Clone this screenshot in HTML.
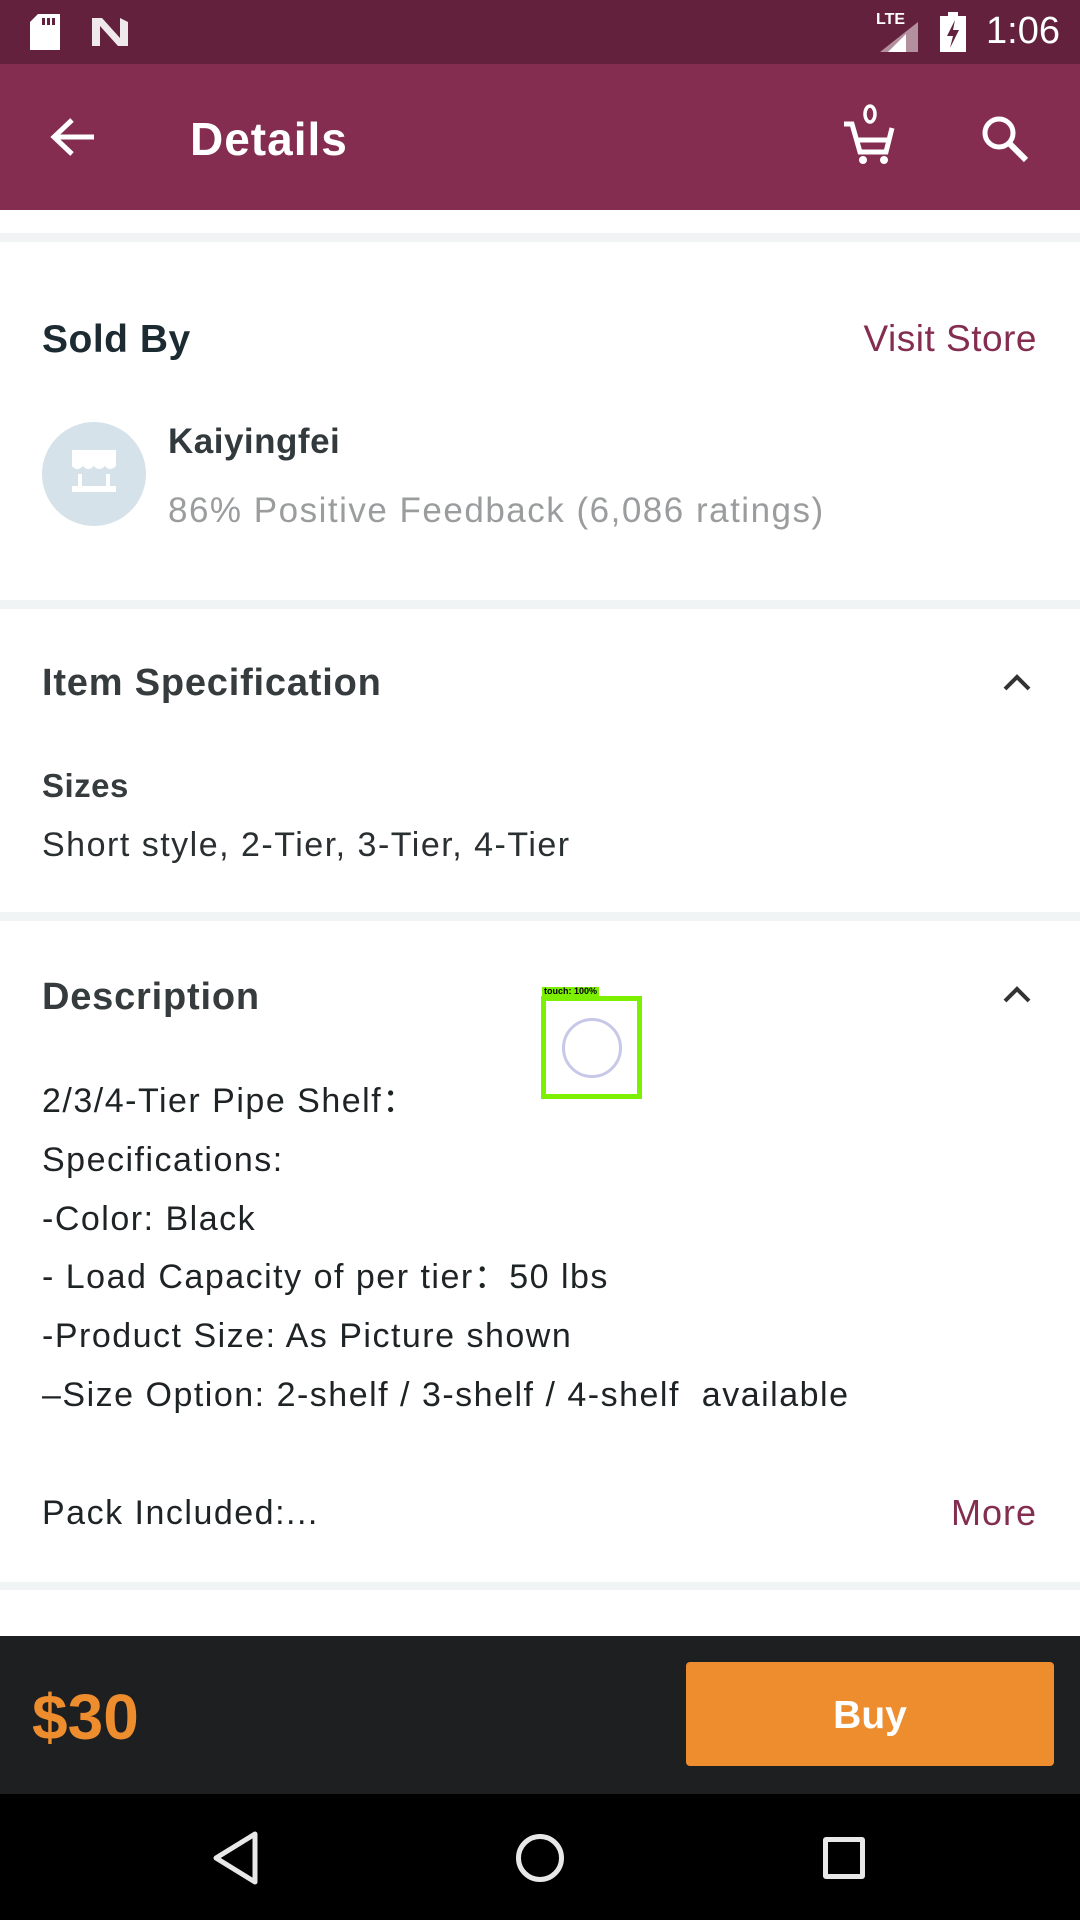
<!DOCTYPE html>
<html><head><meta charset="utf-8"><style>
*{margin:0;padding:0;box-sizing:border-box}
body{width:1080px;height:1920px;position:relative;background:#fff;font-family:"Liberation Sans",sans-serif;overflow:hidden}
.a{position:absolute}
.t{position:absolute;white-space:nowrap;line-height:1}
.r{letter-spacing:1.5px}
</style></head><body>
<div class="a" style="left:0;top:0;width:1080px;height:64px;background:#64213d"></div>
<div class="a" style="left:0;top:64px;width:1080px;height:146px;background:#842d50"></div>
<svg class="a" style="left:30px;top:14px" width="34" height="36"><path d="M8 0H30V36H0V8Z" fill="#fff"/><rect x="12" y="4" width="3" height="7" fill="#64213d"/><rect x="17" y="4" width="3" height="7" fill="#64213d"/><rect x="22" y="4" width="3" height="7" fill="#64213d"/></svg>
<svg class="a" style="left:90px;top:16px" width="40" height="30"><path d="M2 2L12 2L30 22V2L38 6V30L28 30L10 10V30H2Z" fill="#fff" opacity=".9"/></svg>
<div class="t" style="left:876px;top:12px;font-size:16px;color:#fff;font-weight:bold">LTE</div>
<svg class="a" style="left:880px;top:22px" width="40" height="30"><path d="M38 0V30H0Z" fill="#fff" opacity=".5"/><path d="M26 12V30H8Z" fill="#fff"/></svg>
<svg class="a" style="left:940px;top:12px" width="26" height="40"><rect x="8" y="0" width="10" height="4" fill="#fff"/><rect x="0" y="4" width="26" height="36" fill="#fff"/><path d="M15 8L7 24H13L10 36L19 18H13Z" fill="#64213d"/></svg>
<div class="t" style="left:986px;top:12px;font-size:38px;color:#fff">1:06</div>
<svg class="a" style="left:50px;top:116px" width="46" height="42"><path d="M44 21H6M22 4L4 21L22 38" stroke="#fff" stroke-width="5" fill="none"/></svg>
<div class="t" style="left:190px;top:116px;font-size:46px;color:#fff;font-weight:bold;letter-spacing:1px">Details</div>
<svg class="a" style="left:842px;top:102px" width="56" height="62"><path d="M2 22H10L18 50H44L50 26" stroke="#fff" stroke-width="5" fill="none"/><path d="M16 38H46" stroke="#fff" stroke-width="5"/><circle cx="21" cy="58" r="4" fill="#fff"/><circle cx="42" cy="58" r="4" fill="#fff"/><ellipse cx="28" cy="12" rx="5" ry="8" stroke="#fff" stroke-width="3.5" fill="none"/></svg>
<svg class="a" style="left:980px;top:114px" width="50" height="50"><circle cx="19" cy="19" r="14" stroke="#fff" stroke-width="5" fill="none"/><path d="M29 29L46 46" stroke="#fff" stroke-width="6"/></svg>
<div class="a" style="left:0;top:233px;width:1080px;height:9px;background:#f1f4f4"></div>
<div class="a" style="left:0;top:600px;width:1080px;height:9px;background:#f1f4f4"></div>
<div class="a" style="left:0;top:912px;width:1080px;height:9px;background:#f1f4f4"></div>
<div class="a" style="left:0;top:1582px;width:1080px;height:8px;background:#f1f4f4"></div>
<div class="t" style="left:42px;top:320px;font-size:39px;font-weight:bold;color:#1c2a32;letter-spacing:0.5px">Sold By</div>
<div class="t r" style="right:43px;top:320px;font-size:37px;color:#842d50;letter-spacing:0.5px">Visit Store</div>
<div class="a" style="left:42px;top:422px;width:104px;height:104px;border-radius:50%;background:#d5e2ea"></div>
<svg class="a" style="left:70px;top:448px" width="48" height="50"><path d="M2 2H46V18Q40 24 35 18Q29 24 24 18Q18 24 13 18Q7 24 2 18Z" fill="#fff"/><rect x="8" y="26" width="4" height="14" fill="#fff"/><rect x="36" y="26" width="4" height="14" fill="#fff"/><rect x="2" y="38" width="44" height="6" fill="#fff"/></svg>
<div class="t" style="left:168px;top:424px;font-size:35px;font-weight:bold;color:#333a3d;letter-spacing:0.5px">Kaiyingfei</div>
<div class="t r" style="left:168px;top:493px;font-size:35px;color:#9a9c9d">86% Positive Feedback (6,086 ratings)</div>
<div class="t" style="left:42px;top:664px;font-size:38px;font-weight:bold;color:#363c3e;letter-spacing:0.8px">Item Specification</div>
<svg class="a" style="left:1002px;top:672px" width="30" height="20"><path d="M3 17L15 5L27 17" stroke="#333" stroke-width="4" fill="none"/></svg>
<div class="t" style="left:42px;top:769px;font-size:33px;font-weight:bold;color:#363c3e;letter-spacing:0.5px">Sizes</div>
<div class="t r" style="left:42px;top:828px;font-size:34px;color:#2a2f31">Short style, 2-Tier, 3-Tier, 4-Tier</div>
<div class="t" style="left:42px;top:978px;font-size:38px;font-weight:bold;color:#363c3e;letter-spacing:0.8px">Description</div>
<svg class="a" style="left:1002px;top:984px" width="30" height="20"><path d="M3 17L15 5L27 17" stroke="#333" stroke-width="4" fill="none"/></svg>
<div class="a r" style="left:42px;top:1072px;font-size:34px;line-height:58.8px;color:#1e2325;white-space:pre">2/3/4-Tier Pipe Shelf：
Specifications:
-Color: Black
- Load Capacity of per tier：50 lbs
-Product Size: As Picture shown
–Size Option: 2-shelf / 3-shelf / 4-shelf  available</div>
<div class="t r" style="left:42px;top:1496px;font-size:34px;color:#1e2325">Pack Included:...</div>
<div class="t" style="right:43px;top:1495px;font-size:36px;color:#842d50;letter-spacing:1px">More</div>
<div class="a" style="left:541px;top:996px;width:101px;height:103px;border:5px solid #7cf000"></div>
<div class="t" style="left:542px;top:987px;font-size:9px;font-weight:bold;background:#7cf000;color:#000;padding:0 2px">touch: 100%</div>
<div class="a" style="left:562px;top:1018px;width:60px;height:60px;border-radius:50%;border:3px solid #c8c8e8"></div>
<div class="a" style="left:0;top:1636px;width:1080px;height:158px;background:#1d1f20"></div>
<div class="t" style="left:32px;top:1685px;font-size:64px;font-weight:bold;color:#ee8d2e">$30</div>
<div class="a" style="left:686px;top:1662px;width:368px;height:104px;background:#ee8d2e;border-radius:4px"></div>
<div class="t" style="left:686px;top:1696px;width:368px;text-align:center;font-size:39px;font-weight:bold;color:#fff">Buy</div>
<div class="a" style="left:0;top:1794px;width:1080px;height:126px;background:#000"></div>
<svg class="a" style="left:210px;top:1830px" width="50" height="56"><path d="M45 4V52L6 28Z" stroke="#e8e8e8" stroke-width="5" fill="none" stroke-linejoin="round"/></svg>
<div class="a" style="left:516px;top:1834px;width:48px;height:48px;border-radius:50%;border:5px solid #e8e8e8"></div>
<div class="a" style="left:823px;top:1837px;width:42px;height:42px;border-radius:3px;border:5px solid #e8e8e8"></div>
</body></html>
